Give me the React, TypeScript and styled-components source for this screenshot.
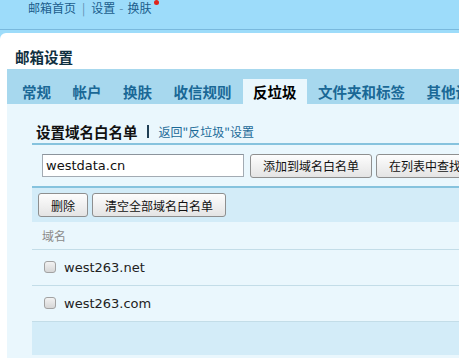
import React from 'react';
import styled, { createGlobalStyle } from 'styled-components';

const GlobalStyle = createGlobalStyle`
  html, body {
    margin: 0;
    padding: 0;
    background: #9ddcfa;
    font-family: "Noto Sans CJK SC", "DejaVu Sans", sans-serif;
    font-size: 12px;
    overflow: hidden;
  }
`;

const cjk = `"Noto Sans CJK SC", sans-serif`;
const latin = `"DejaVu Sans", "Noto Sans CJK SC", sans-serif`;

const Page = styled.div`
  width: 459px;
  height: 358px;
  overflow: hidden;
  background: #9ddcfa;
`;

const TopBar = styled.div`
  height: 30px;
  border-bottom: 1px solid #79b9dd;
  display: flex;
  align-items: flex-start;
  padding-left: 28px;
  box-sizing: border-box;
`;

const TopLink = styled.a`
  font-family: ${cjk};
  font-size: 12px;
  line-height: 16px;
  color: #1b5d8c;
  text-decoration: none;
  position: relative;
`;

const TopSep = styled.span<{ $narrow?: boolean }>`
  font-size: 12px;
  line-height: 16px;
  color: #5d8fb0;
  margin: ${(p) => (p.$narrow ? '0 4px' : '0 6px')};
`;

const Dot = styled.span`
  position: absolute;
  right: -8px;
  top: 0px;
  width: 5px;
  height: 5px;
  border-radius: 50%;
  background: #e0251b;
`;

const Band = styled.div`
  padding-top: 3px;
`;

const Panel = styled.div`
  background: #ffffff;
  border-top-left-radius: 6px;
  padding: 14px 0 0 7px;
  height: 340px;
`;

const PanelTitle = styled.h1`
  margin: 0 0 0 8px;
  font-family: ${cjk};
  font-size: 14.5px;
  font-weight: bold;
  line-height: 20px;
  color: #0f2f40;
  height: 22px;
`;

const TabBar = styled.div`
  background: #a7d8ee;
  height: 35px;
  display: flex;
  align-items: flex-end;
  padding-left: 5px;
  white-space: nowrap;
`;

const Tab = styled.div<{ $active?: boolean }>`
  height: 25px;
  line-height: 25px;
  padding: 0 10px;
  margin-right: 1.5px;
  font-family: ${cjk};
  font-size: 14.5px;
  font-weight: bold;
  color: ${(p) => (p.$active ? '#000000' : '#1a6896')};
  background: ${(p) => (p.$active ? '#eaf7fd' : 'transparent')};
  flex-shrink: 0;
`;

const Content = styled.div`
  background: #eaf7fd;
  padding-left: 25px;
  height: 260px;
`;

const Heading = styled.div`
  height: 39px;
  box-sizing: border-box;
  padding: 15px 0 0 4px;
  display: flex;
  align-items: center;
  border-bottom: 2px solid #86c3de;
  white-space: nowrap;
  box-sizing: content-box;
  height: 24px;
`;

const HeadTitle = styled.span`
  font-family: ${cjk};
  font-size: 14.5px;
  font-weight: bold;
  color: #111;
`;

const HeadBar = styled.span`
  display: inline-block;
  width: 2px;
  height: 13px;
  background: #1f3f55;
  margin: 0 10px 0 9px;
`;

const BackLink = styled.a`
  font-family: ${cjk};
  font-size: 12px;
  color: #1b6a98;
  text-decoration: none;
`;

const FormRow = styled.div`
  height: 41px;
  display: flex;
  align-items: center;
  gap: 4px;
  padding-left: 10px;
  border-bottom: 2px solid #86c3de;
  white-space: nowrap;
`;

const Input = styled.input`
  width: 202px;
  height: 23px;
  box-sizing: border-box;
  flex-shrink: 0;
  border: 1px solid #a3abb3;
  border-top-color: #8c949c;
  padding: 0 3px;
  font-family: ${latin};
  font-size: 13px;
  color: #111;
  background: #fff;
  margin-right: 2px;
  outline: none;
`;

const Button = styled.button`
  height: 24px;
  box-sizing: border-box;
  padding: 0 12px;
  border: 1px solid #8e8f8f;
  border-radius: 3px;
  background: linear-gradient(#fdfdfd, #e4e4e4);
  font-family: ${cjk};
  font-size: 12px;
  color: #111;
  flex-shrink: 0;
  cursor: pointer;
`;

const Toolbar = styled.div`
  background: #d3ecf8;
  height: 34px;
  display: flex;
  align-items: center;
  gap: 4px;
  padding-left: 6px;
`;

const HeaderRow = styled.div`
  height: 27px;
  display: flex;
  align-items: center;
  padding-left: 10px;
  border-bottom: 1px solid #c3dde8;
  font-family: ${cjk};
  font-size: 12px;
  color: #8a8a8a;
`;

const Row = styled.div`
  height: 35px;
  display: flex;
  align-items: center;
  padding-left: 12px;
  border-bottom: 1px solid #c3dde8;
`;

const Check = styled.span`
  width: 10px;
  height: 10px;
  border: 1px solid #a2a2a2;
  border-radius: 3px;
  background: linear-gradient(#f2f2f2, #d6d6d6);
  margin-right: 8px;
  margin-top: -1px;
`;

const Domain = styled.span`
  font-family: ${latin};
  font-size: 13px;
  color: #222;
`;

const Footer = styled.div`
  height: 33px;
  background: #d3ecf8;
`;

const tabs = ['常规', '帐户', '换肤', '收信规则', '反垃圾', '文件夹和标签', '其他设置'];
const domains = ['west263.net', 'west263.com'];

export default function App() {
  return (
    <Page>
      <GlobalStyle />
      <TopBar>
        <TopLink href="#">邮箱首页</TopLink>
        <TopSep>|</TopSep>
        <TopLink href="#">设置</TopLink>
        <TopSep $narrow>-</TopSep>
        <TopLink href="#">
          换肤
          <Dot />
        </TopLink>
      </TopBar>
      <Band>
        <Panel>
          <PanelTitle>邮箱设置</PanelTitle>
          <TabBar>
            {tabs.map((t) => (
              <Tab key={t} $active={t === '反垃圾'}>
                {t}
              </Tab>
            ))}
          </TabBar>
          <Content>
            <Heading>
              <HeadTitle>设置域名白名单</HeadTitle>
              <HeadBar />
              <BackLink href="#">返回"反垃圾"设置</BackLink>
            </Heading>
            <FormRow>
              <Input defaultValue="westdata.cn" />
              <Button>添加到域名白名单</Button>
              <Button>在列表中查找</Button>
            </FormRow>
            <Toolbar>
              <Button>删除</Button>
              <Button>清空全部域名白名单</Button>
            </Toolbar>
            <HeaderRow>域名</HeaderRow>
            {domains.map((d) => (
              <Row key={d}>
                <Check />
                <Domain>{d}</Domain>
              </Row>
            ))}
            <Footer />
          </Content>
        </Panel>
      </Band>
    </Page>
  );
}
